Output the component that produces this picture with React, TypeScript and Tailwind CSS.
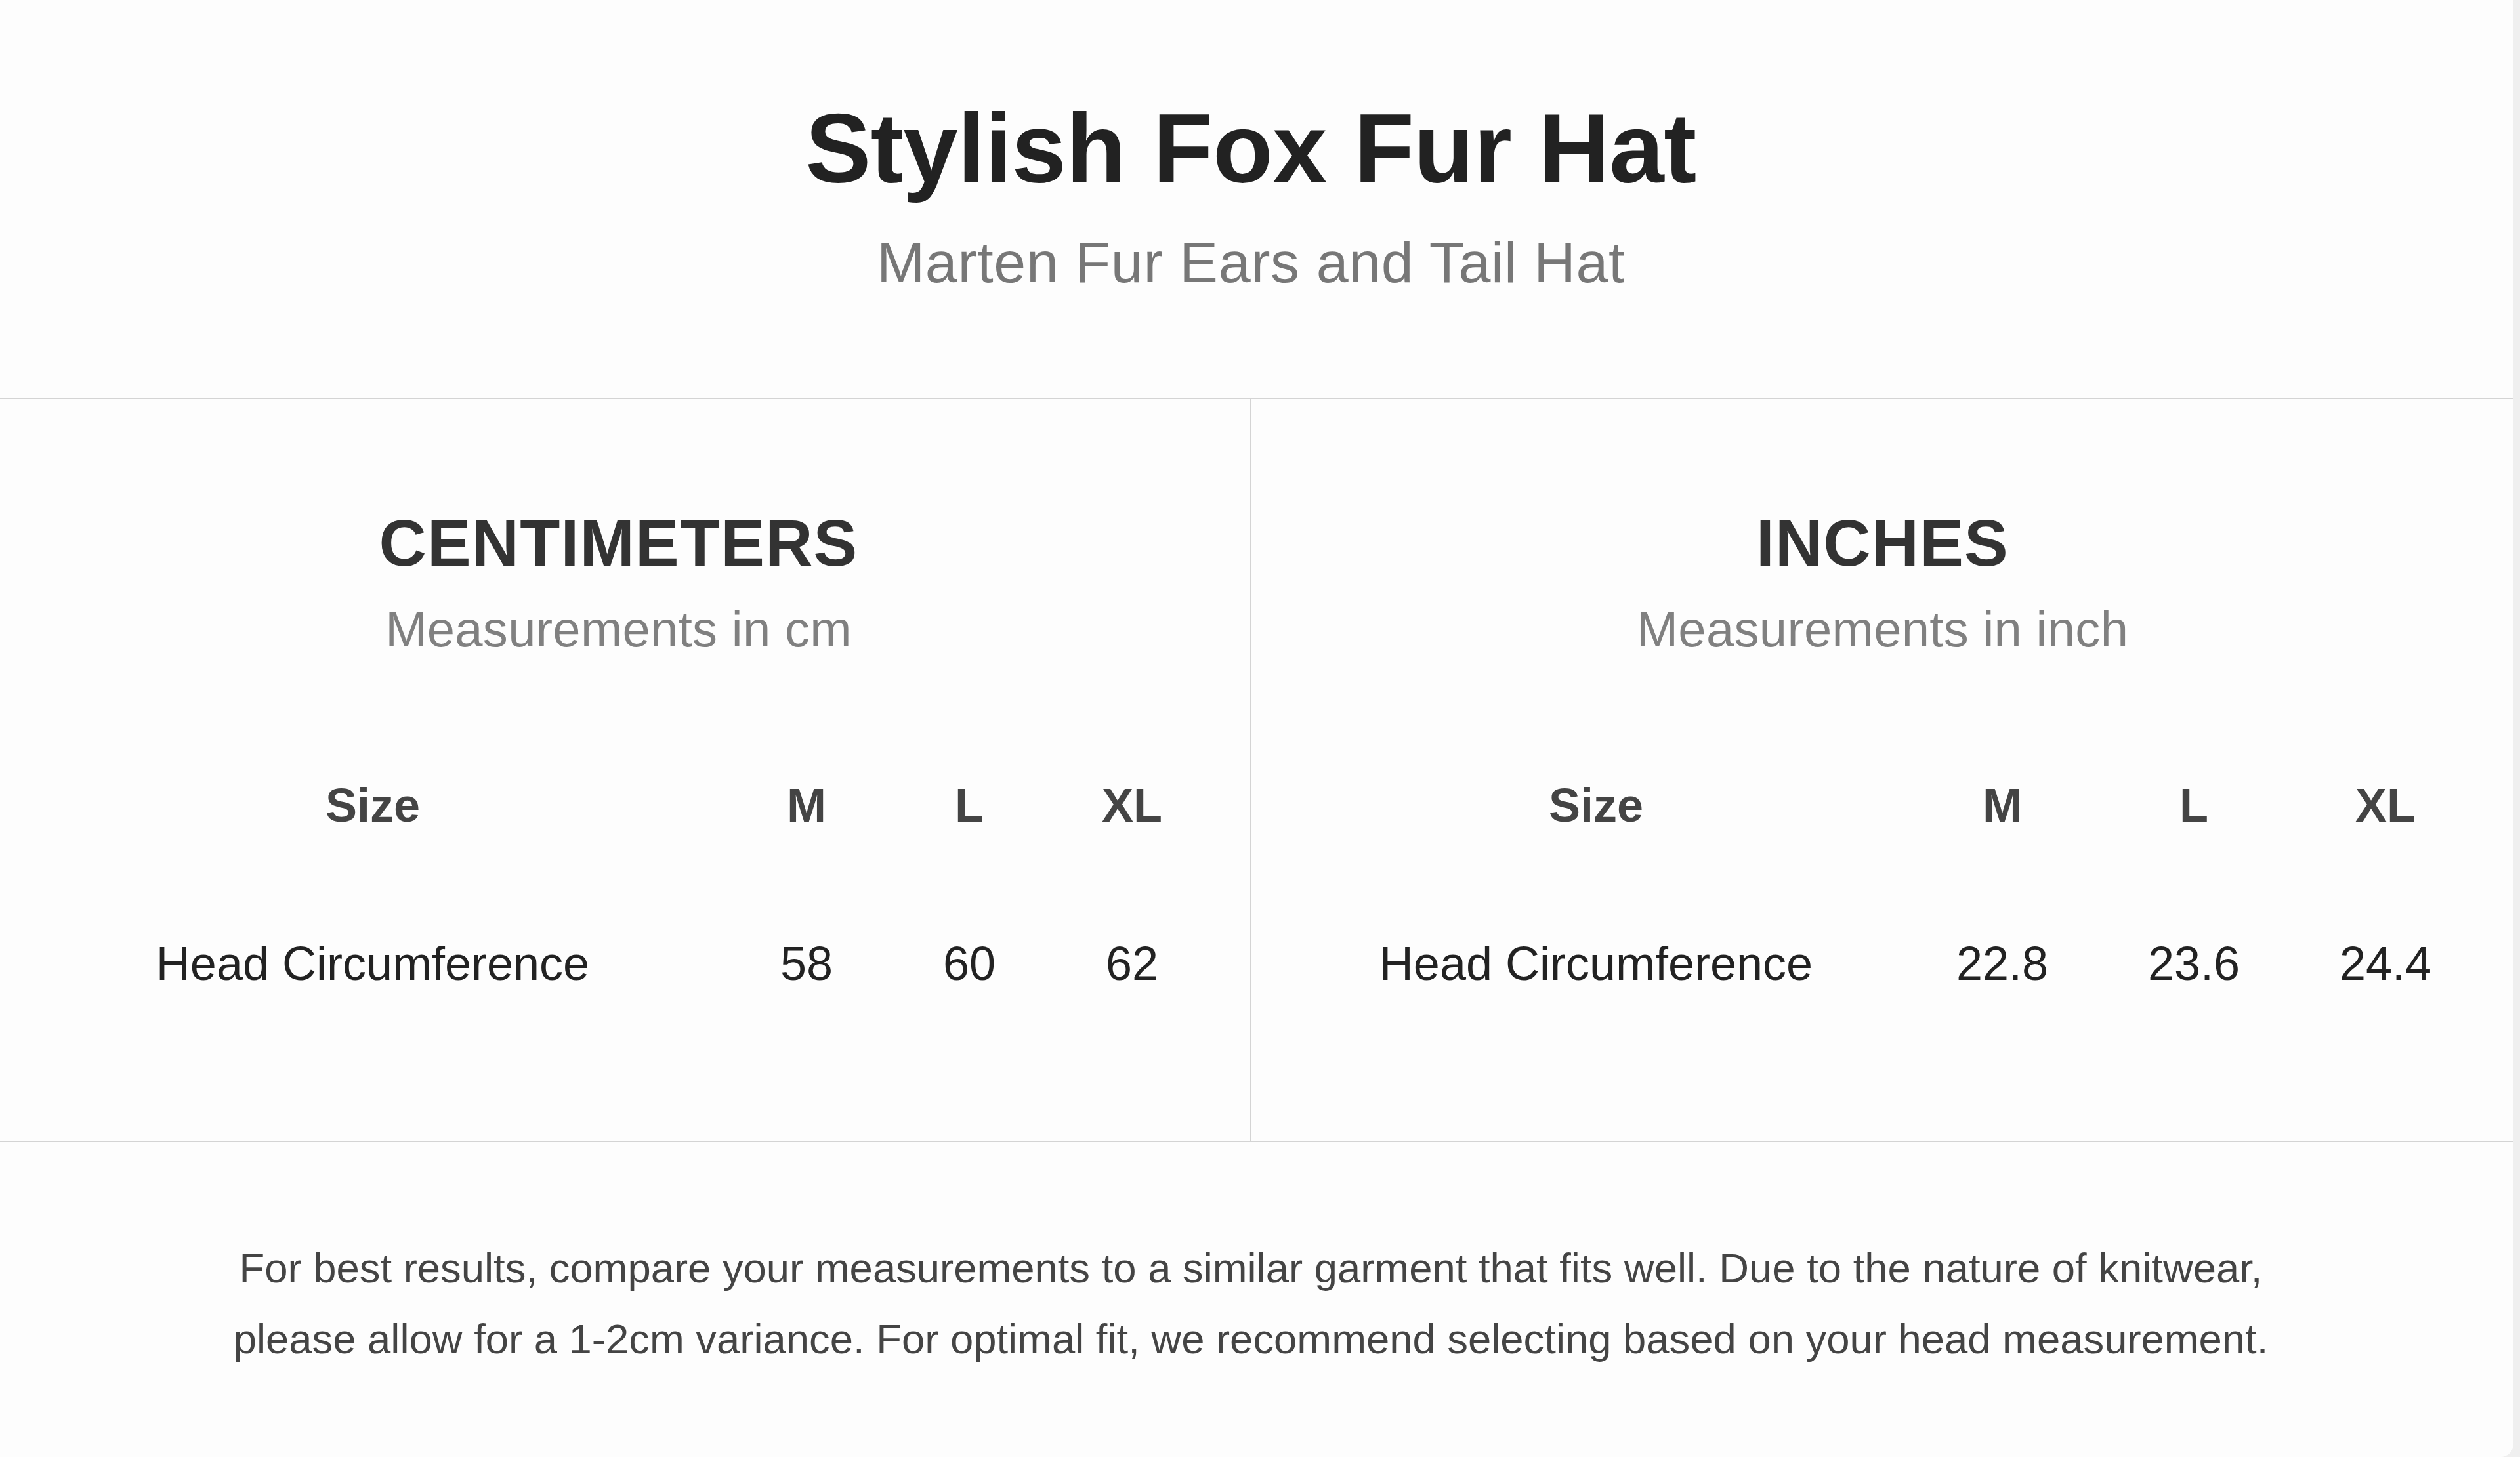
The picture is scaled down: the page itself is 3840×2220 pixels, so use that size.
const font = "font-['Liberation_Sans',Arial,sans-serif]";

type Chart = {
  title: string;
  note: string;
  cols: string;
  pad: string;
  headPad: string;
  values: string[];
};

const charts: Chart[] = [
  {
    title: 'CENTIMETERS',
    note: 'Measurements in cm',
    cols: 'grid-cols-[1074px_248px_248px_248px]',
    pad: 'pl-[31px]',
    headPad: 'pr-[20px]',
    values: ['58', '60', '62'],
  },
  {
    title: 'INCHES',
    note: 'Measurements in inch',
    cols: 'grid-cols-[946px_292px_292px_292px]',
    pad: 'pl-[52px]',
    headPad: '',
    values: ['22.8', '23.6', '24.4'],
  },
];

const sizes = ['M', 'L', 'XL'];

function SizePanel({ chart, divider }: { chart: Chart; divider?: boolean }) {
  return (
    <div className={`pt-[169px] pb-[234px] ${divider ? 'border-r-2 border-[#d4d4d4]' : ''}`}>
      <div className={chart.headPad}>
        <h2 className="text-center text-[100px] leading-none font-bold tracking-[1.2px] text-[#333]">
          {chart.title}
        </h2>
        <p className="mt-[44px] text-center text-[76px] leading-none tracking-[0.3px] text-[#808080]">
          {chart.note}
        </p>
      </div>

      <div className={`mt-[194px] grid ${chart.cols} ${chart.pad} text-center text-[72px] leading-none`}>
        <div className="font-bold text-[#444]">Size</div>
        {sizes.map((s) => (
          <div key={s} className="font-bold text-[#444]">
            {s}
          </div>
        ))}
        <div className="mt-[169px] text-[#222]">Head Circumference</div>
        {chart.values.map((v) => (
          <div key={v} className="mt-[169px] text-[#222]">
            {v}
          </div>
        ))}
      </div>
    </div>
  );
}

export default function App() {
  return (
    <div className={`${font} flex h-[2220px] w-full bg-[#efefef]`}>
      <div className="h-[2220px] w-[3830px] rounded-br-[20px] bg-[#fdfdfd]">
        {/* header */}
        <header className="h-[608px] border-b-2 border-[#d4d4d4] pt-[151px] pr-[18px] text-center">
          <h1 className="text-[150px] leading-none font-bold tracking-[-0.5px] text-[#222]">
            Stylish Fox Fur Hat
          </h1>
          <p className="mt-[55px] text-[88px] leading-none tracking-[0.6px] text-[#777]">
            Marten Fur Ears and Tail Hat
          </p>
        </header>

        {/* size tables */}
        <section className="grid grid-cols-[1907px_1fr] border-b-2 border-[#d4d4d4]">
          <SizePanel chart={charts[0]} divider />
          <SizePanel chart={charts[1]} />
        </section>

        {/* footer note */}
        <footer className="pt-[138px] pr-[18px] text-center text-[63.4px] leading-[108px] text-[#444]">
          For best results, compare your measurements to a similar garment that fits well. Due to the nature of knitwear,
          <br />
          please allow for a 1-2cm variance. For optimal fit, we recommend selecting based on your head measurement.
        </footer>
      </div>
    </div>
  );
}
